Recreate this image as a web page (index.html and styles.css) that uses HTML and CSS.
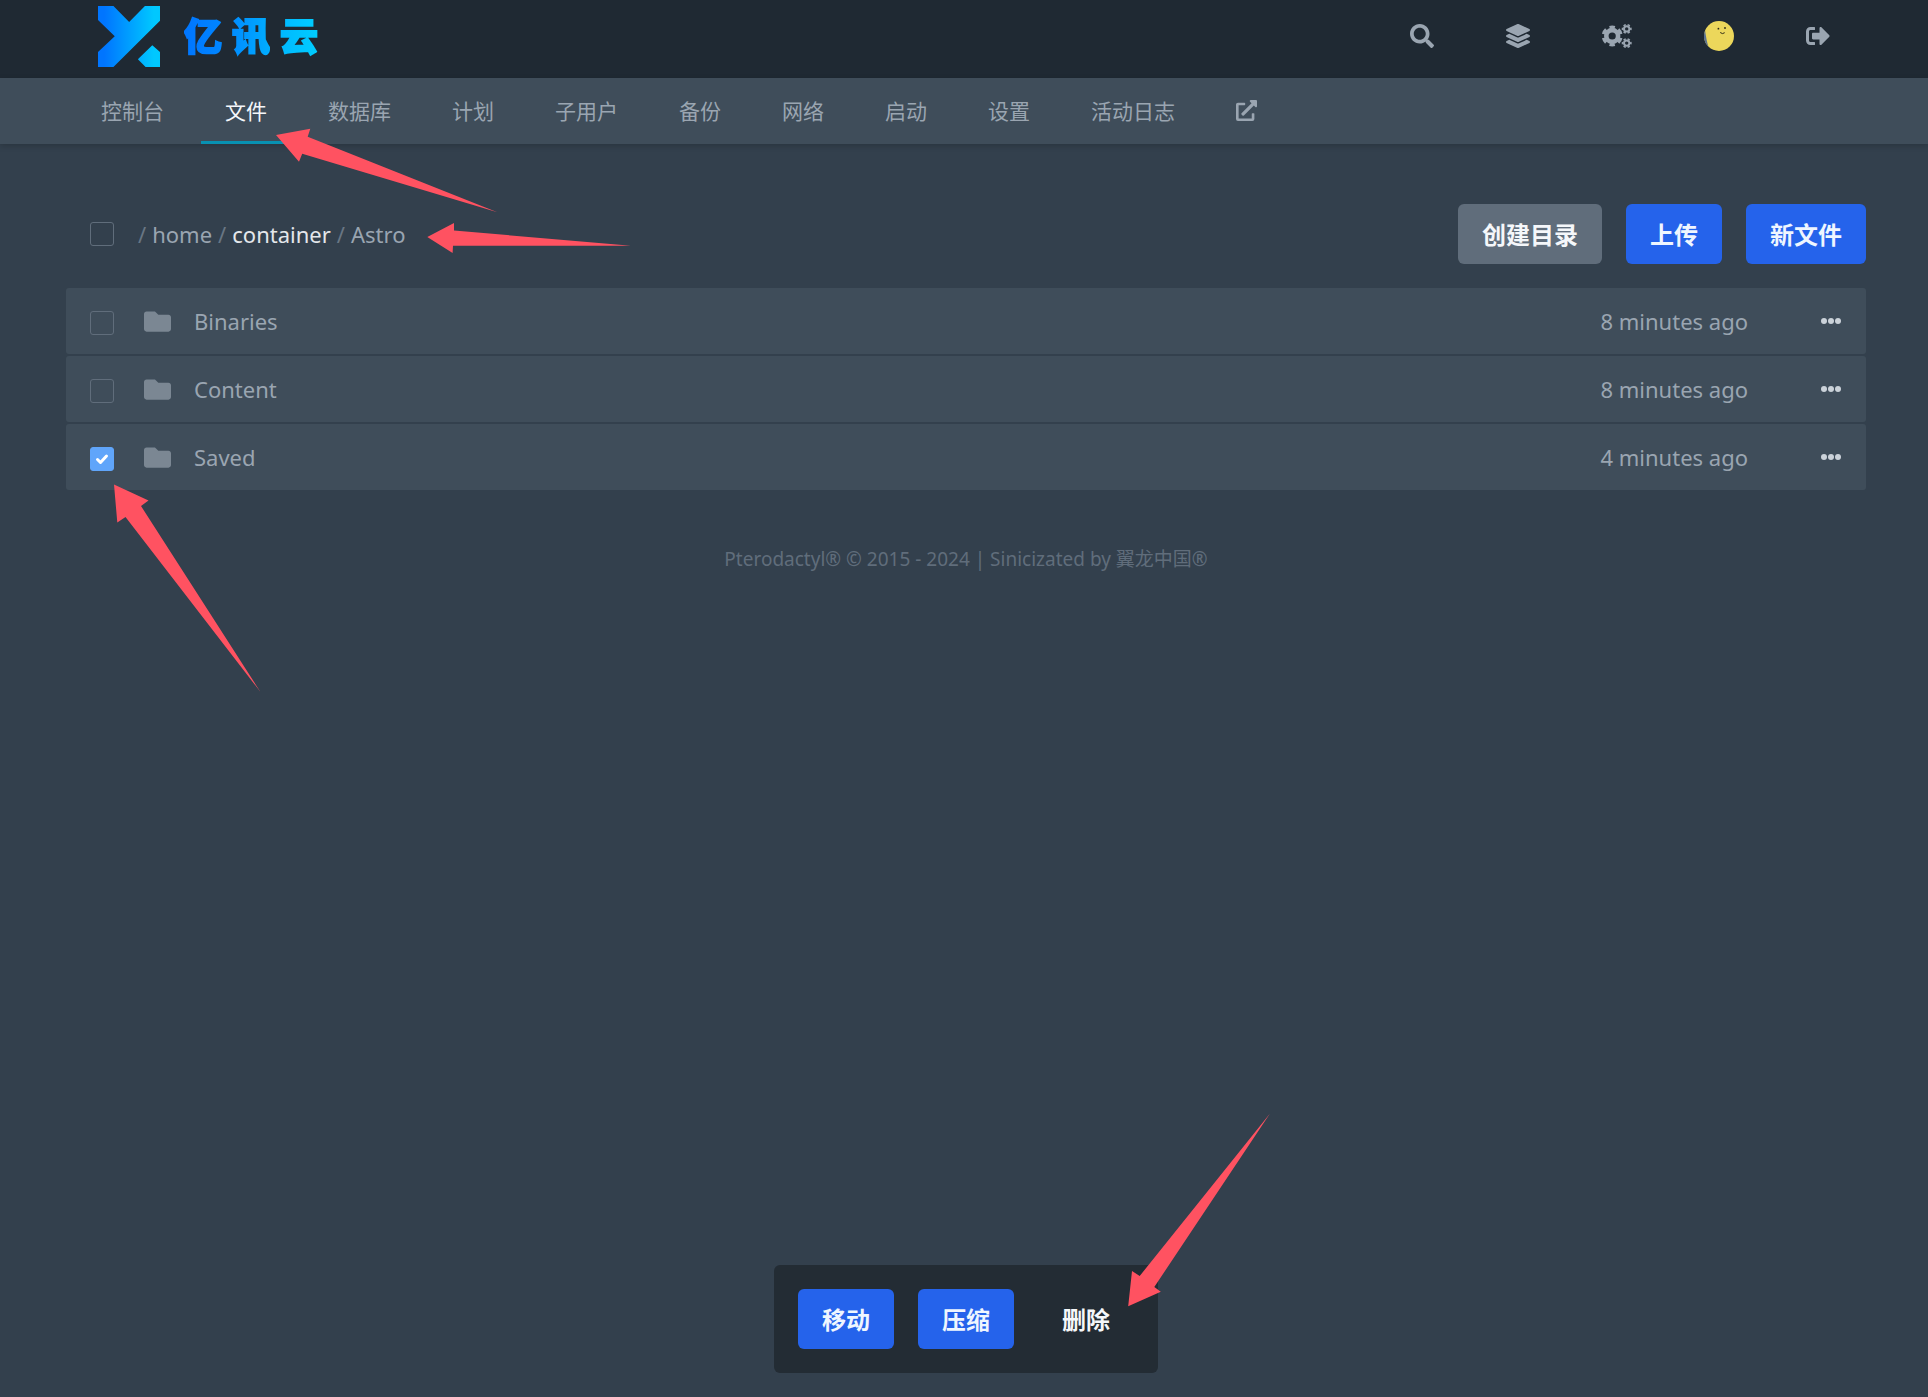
FILE: index.html
```html
<!DOCTYPE html>
<html lang="zh-CN">
<head>
<meta charset="utf-8">
<meta name="viewport" content="width=device-width, initial-scale=1">
<title>文件</title>
<link rel="stylesheet" href="styles.css">
</head>
<body>
<svg class="sprite" aria-hidden="true">
  <symbol id="folder" viewBox="0 0 512 512"><path d="M464 128H272l-64-64H48C21.49 64 0 85.49 0 112v288c0 26.51 21.49 48 48 48h416c26.51 0 48-21.49 48-48V176c0-26.51-21.49-48-48-48z"/></symbol>
  <symbol id="dots" viewBox="0 0 22 8"><circle cx="4" cy="4" r="3"/><circle cx="11" cy="4" r="3"/><circle cx="18" cy="4" r="3"/></symbol>
</svg>

<header class="topbar">
  <div class="container topbar-inner">
    <a class="logo" href="#">
      <svg class="logo-mark" viewBox="114 18 185 182" aria-hidden="true">
        <defs><linearGradient id="brand" gradientUnits="userSpaceOnUse" x1="114" y1="0" x2="299" y2="0"><stop offset="0.1" stop-color="#0075ff"/><stop offset="0.9" stop-color="#00c8ff"/></linearGradient></defs>
        <path fill="url(#brand)" d="M114 18H160L207 66 254 18H299V62L160 200H114V155L164 108 114 60ZM276 135L299 155V200H256L233 177Z"/>
      </svg>
      <span class="logo-text"><span class="c1">亿</span><span class="c2">讯</span><span class="c3">云</span></span>
    </a>
    <nav class="tools" aria-label="工具">
      <button type="button" class="tool" aria-label="搜索"><svg class="icon" viewBox="0 0 512 512"><path d="M505 442.7L405.3 343c-4.5-4.5-10.6-7-17-7H372c27.6-35.3 44-79.7 44-128C416 93.1 322.9 0 208 0S0 93.1 0 208s93.1 208 208 208c48.3 0 92.7-16.4 128-44v16.3c0 6.4 2.5 12.5 7 17l99.7 99.7c9.4 9.4 24.6 9.4 33.9 0l28.3-28.3c9.4-9.4 9.4-24.6.1-34zM208 336c-70.7 0-128-57.2-128-128 0-70.7 57.2-128 128-128 70.7 0 128 57.2 128 128 0 70.7-57.2 128-128 128z"/></svg></button>
      <a class="tool" href="#" aria-label="服务器"><svg class="icon" viewBox="0 0 512 512"><path d="M12.41 148.02l232.94 105.67c6.8 3.09 14.49 3.09 21.29 0l232.94-105.67c16.55-7.51 16.55-32.52 0-40.03L266.65 2.31a25.607 25.607 0 0 0-21.29 0L12.41 107.98c-16.55 7.51-16.55 32.53 0 40.04zm487.18 88.28l-58.09-26.33-161.64 73.27c-7.56 3.43-15.59 5.17-23.86 5.17s-16.29-1.74-23.86-5.17L70.51 209.97l-58.1 26.33c-16.55 7.5-16.55 32.5 0 40l232.94 105.59c6.8 3.08 14.49 3.08 21.29 0L499.59 276.3c16.55-7.5 16.55-32.5 0-40zm0 127.8l-57.87-26.23-161.86 73.37c-7.56 3.43-15.59 5.17-23.86 5.17s-16.29-1.74-23.86-5.17L70.29 337.87 12.41 364.1c-16.55 7.5-16.55 32.5 0 40l232.94 105.59c6.8 3.08 14.49 3.08 21.29 0L499.59 404.1c16.55-7.5 16.55-32.5 0-40z"/></svg></a>
      <a class="tool" href="#" aria-label="管理"><svg class="icon icon-wide" viewBox="0 0 30 24">
        <g class="gear">
          <circle cx="10.2" cy="12" r="5.9" stroke-width="4.6"/>
          <circle cx="10.2" cy="12" r="8.9" stroke-width="3.2" pathLength="12" stroke-dasharray="1.15 .85" stroke-dashoffset="-.43"/>
          <circle cx="24.7" cy="4.9" r="2.7" stroke-width="2"/>
          <circle cx="24.7" cy="4.9" r="4.2" stroke-width="1.6" pathLength="12" stroke-dasharray="1.1 .9" stroke-dashoffset=".55"/>
          <circle cx="24.7" cy="19.1" r="2.7" stroke-width="2"/>
          <circle cx="24.7" cy="19.1" r="4.2" stroke-width="1.6" pathLength="12" stroke-dasharray="1.1 .9" stroke-dashoffset=".55"/>
        </g></svg></a>
      <a class="tool" href="#" aria-label="账户"><svg class="avatar" viewBox="0 0 30 30">
        <circle cx="15" cy="15" r="15" fill="#ecd75b"/><path fill="#5d7390" d="M1.1 9.5A15 15 0 0 0 4.4 25.6Q2.5 20 1.1 9.5Z"/>
        <circle cx="14.4" cy="7.7" r=".9" fill="#2f2a16"/><circle cx="21" cy="7" r=".9" fill="#2f2a16"/><path d="M16.2 11.5Q18.5 13.6 20.7 11.7" fill="none" stroke="#2f2a16" stroke-width="1"/></svg></a>
      <button type="button" class="tool" aria-label="退出"><svg class="icon" viewBox="0 0 512 512"><path d="M497 273L329 441c-15 15-41 4.5-41-17v-96H152c-13.3 0-24-10.7-24-24v-96c0-13.3 10.7-24 24-24h136V88c0-21.4 25.9-32 41-17l168 168c9.3 9.4 9.3 24.6 0 34zM192 436v-40c0-6.6-5.4-12-12-12H96c-17.7 0-32-14.3-32-32V160c0-17.7 14.3-32 32-32h84c6.6 0 12-5.4 12-12V76c0-6.6-5.4-12-12-12H96c-53 0-96 43-96 96v192c0 53 43 96 96 96h84c6.6 0 12-5.4 12-12z"/></svg></button>
    </nav>
  </div>
</header>

<nav class="subnav" aria-label="服务器">
  <div class="container tabs">
    <a class="tab" href="#">控制台</a>
    <a class="tab active" href="#" aria-current="page">文件<svg class="arrow arrow-tab" viewBox="276 128 222 85" aria-hidden="true"><path d="M276 135L310.3 128.7 307.7 136.7 497.4 212.3 302.2 153.7 299 161.7Z"/></svg></a>
    <a class="tab" href="#">数据库</a>
    <a class="tab" href="#">计划</a>
    <a class="tab" href="#">子用户</a>
    <a class="tab" href="#">备份</a>
    <a class="tab" href="#">网络</a>
    <a class="tab" href="#">启动</a>
    <a class="tab" href="#">设置</a>
    <a class="tab" href="#">活动日志</a>
    <a class="tab" href="#" aria-label="在管理面板中打开"><svg class="icon-ext" viewBox="0 0 512 512"><path d="M432,320H400a16,16,0,0,0-16,16V448H64V128H208a16,16,0,0,0,16-16V80a16,16,0,0,0-16-16H48A48,48,0,0,0,0,112V464a48,48,0,0,0,48,48H400a48,48,0,0,0,48-48V336A16,16,0,0,0,432,320ZM488,0h-128c-21.37,0-32.05,25.91-17,41l35.73,35.73L135,320.37a24,24,0,0,0,0,34L157.67,377a24,24,0,0,0,34,0L435.28,133.32,471,169c15,15,41,4.5,41-17V24A24,24,0,0,0,488,0Z"/></svg></a>
  </div>
</nav>

<main class="container content">
  <div class="toolbar">
    <input class="check" type="checkbox" aria-label="全选">
    <div class="crumbs">
      <span>/</span><a href="#">home</a><span>/</span><a class="root" href="#">container</a><span>/</span><a href="#">Astro</a>
      <svg class="arrow arrow-path" viewBox="429 223 205 31" aria-hidden="true"><path d="M429.3 237L456 223V230.5L633 245.8H455L454.6 253Z"/></svg>
    </div>
    <div class="actions">
      <button type="button" class="btn btn-grey">创建目录</button>
      <button type="button" class="btn">上传</button>
      <button type="button" class="btn">新文件</button>
    </div>
  </div>

  <ul class="files">
    <li class="row">
      <input class="check" type="checkbox" aria-label="Binaries">
      <a class="file" href="#"><svg class="folder"><use href="#folder"/></svg><span class="name">Binaries</span><span class="time">8 minutes ago</span></a>
      <button type="button" class="more" aria-label="更多"><svg class="dots"><use href="#dots"/></svg></button>
    </li>
    <li class="row">
      <input class="check" type="checkbox" aria-label="Content">
      <a class="file" href="#"><svg class="folder"><use href="#folder"/></svg><span class="name">Content</span><span class="time">8 minutes ago</span></a>
      <button type="button" class="more" aria-label="更多"><svg class="dots"><use href="#dots"/></svg></button>
    </li>
    <li class="row">
      <input class="check" type="checkbox" aria-label="Saved" checked>
      <a class="file" href="#"><svg class="folder"><use href="#folder"/></svg><span class="name">Saved</span><span class="time">4 minutes ago</span></a>
      <button type="button" class="more" aria-label="更多"><svg class="dots"><use href="#dots"/></svg></button>
      <svg class="arrow arrow-row" viewBox="114 484 147 208" aria-hidden="true"><path d="M114 484.5L148.5 500.5 141 506 260.5 692 125.5 517 117.3 522.5Z"/></svg>
    </li>
  </ul>

  <footer class="copyright">Pterodactyl® © 2015 - 2024 | Sinicizated by 翼龙中国®</footer>
</main>

<div class="bulk-wrap">
  <div class="bulk">
    <button type="button" class="btn">移动</button>
    <button type="button" class="btn">压缩</button>
    <button type="button" class="btn btn-plain">删除</button>
    <svg class="arrow arrow-bulk" viewBox="1128 1113 142 194" aria-hidden="true"><path d="M1128.2 1306.3L1132 1271 1139.7 1276 1270 1113.5 1154.3 1287 1160.8 1291.7Z"/></svg>
  </div>
</div>
</body>
</html>
```
FILE: styles.css
```css
* { box-sizing: border-box; }

body {
  margin: 0;
  min-height: 100vh;
  background: #33404d;
  color: #9aa5b1;
  font: 22px/30px "Noto Sans", "Noto Sans CJK SC", sans-serif;
}

a { color: inherit; text-decoration: none; }
button { border: 0; background: none; color: inherit; font: inherit; cursor: pointer; }
svg { fill: currentColor; flex: none; }
.sprite { position: absolute; width: 0; height: 0; }

.container {
  max-width: 1804px;
  margin: 0 auto;
  padding-left: 4px;
}

/* top bar */
.topbar { background: #1f2933; }
.topbar-inner { display: flex; justify-content: space-between; height: 78px; }

.logo { display: flex; align-items: center; gap: 24px; padding: 0 32px 6px; }
.logo-mark { width: 62px; height: 61px; }
.logo-text {
  display: flex;
  gap: 10px;
  padding-bottom: 4px;
  font: 900 38px/56px "Noto Sans CJK SC", sans-serif;
}
.logo-text span {
  background-clip: text;
  color: transparent;
  -webkit-text-stroke: 2px transparent;
}
.c1 { background-image: linear-gradient(90deg, #0075ff, #0086ff); }
.c2 { background-image: linear-gradient(90deg, #008cff, #00adff); }
.c3 { background-image: linear-gradient(90deg, #00b8ff, #00cdff); }

.tools { display: flex; }
.tool { display: flex; align-items: center; padding: 0 36px 6px; }
.icon { width: 24px; height: 24px; }
.icon-wide { width: 30px; }
.gear { fill: none; stroke: currentColor; }
.avatar { width: 30px; height: 30px; }

/* tabs */
.subnav { background: #3f4d5a; box-shadow: 0 2px 6px rgba(0, 0, 0, .18); }
.tabs { display: flex; gap: 13px; padding-left: 15px; }
.tab {
  position: relative;
  display: flex;
  align-items: center;
  height: 66px;
  padding: 0 24px 2px;
  font: 400 21px/30px "Noto Sans CJK SC", sans-serif;
  white-space: nowrap;
}
.tab.active { color: #f5f7fa; box-shadow: inset 0 -3px #0891b2; }
.icon-ext { width: 21px; height: 21px; }

/* file manager */
.content { padding-top: 60px; }
.toolbar { display: flex; align-items: center; padding-left: 24px; margin-bottom: 24px; }

.check {
  appearance: none;
  flex: none;
  width: 24px;
  height: 24px;
  margin: 0;
  border: 1px solid #606d7b;
  border-radius: 3px;
}
.check:checked {
  border-color: #60a5fa;
  background: #60a5fa url("data:image/svg+xml,%3Csvg xmlns='http://www.w3.org/2000/svg' viewBox='0 0 24 24'%3E%3Cpath d='M7.5 12.5l3 3 6-6.5' fill='none' stroke='white' stroke-width='3' stroke-linecap='round' stroke-linejoin='round'/%3E%3C/svg%3E") center / 24px;
}

.crumbs { position: relative; display: flex; gap: 6px; margin-left: 24px; color: #9aa5b1; }
.crumbs span { color: #697684; }
.crumbs .root { color: #e4e7eb; }

.actions { display: flex; gap: 24px; margin-left: auto; }
.btn {
  height: 60px;
  padding: 0 24px;
  border-radius: 6px;
  background: #2563eb;
  color: #eff6ff;
  font: 700 24px/36px "Noto Sans CJK SC", sans-serif;
  white-space: nowrap;
}
.btn-grey { background: #606d7b; color: #f5f7fa; }
.btn-plain { background: none; color: #f5f7fa; }

.files { display: grid; gap: 2px; margin: 0; padding: 0; list-style: none; }
.row {
  position: relative;
  display: flex;
  align-items: center;
  height: 66px;
  padding-left: 24px;
  border-radius: 3px;
  background: #3f4d5a;
}
.row .check { margin-top: 4px; }
.file { display: flex; flex: 1; align-items: center; padding-left: 30px; }
.folder { width: 27px; height: 27px; color: #7b8793; }
.name { flex: 1; padding-left: 23px; }
.more { display: flex; padding: 24px; margin-left: 48px; color: #cbd2d9; }
.dots { width: 22px; height: 8px; }

.copyright { padding: 54px 0 24px; color: #606d7b; font-size: 19px; text-align: center; }

/* bulk actions */
.bulk-wrap { position: fixed; inset: auto 0 24px; display: flex; justify-content: center; padding-left: 4px; }
.bulk { position: relative; display: flex; gap: 24px; padding: 24px; border-radius: 6px; background: #232c34; }

/* pointers */
.arrow { position: absolute; z-index: 2; fill: #ff5261; pointer-events: none; }
.arrow-tab { top: 50px; left: 75px; width: 222px; height: 85px; }
.arrow-path { top: 4px; left: calc(100% + 22px); width: 205px; height: 31px; }
.arrow-row { top: 60px; left: 48px; width: 147px; height: 208px; }
.arrow-bulk { bottom: 66px; left: 354px; width: 142px; height: 194px; }
```
